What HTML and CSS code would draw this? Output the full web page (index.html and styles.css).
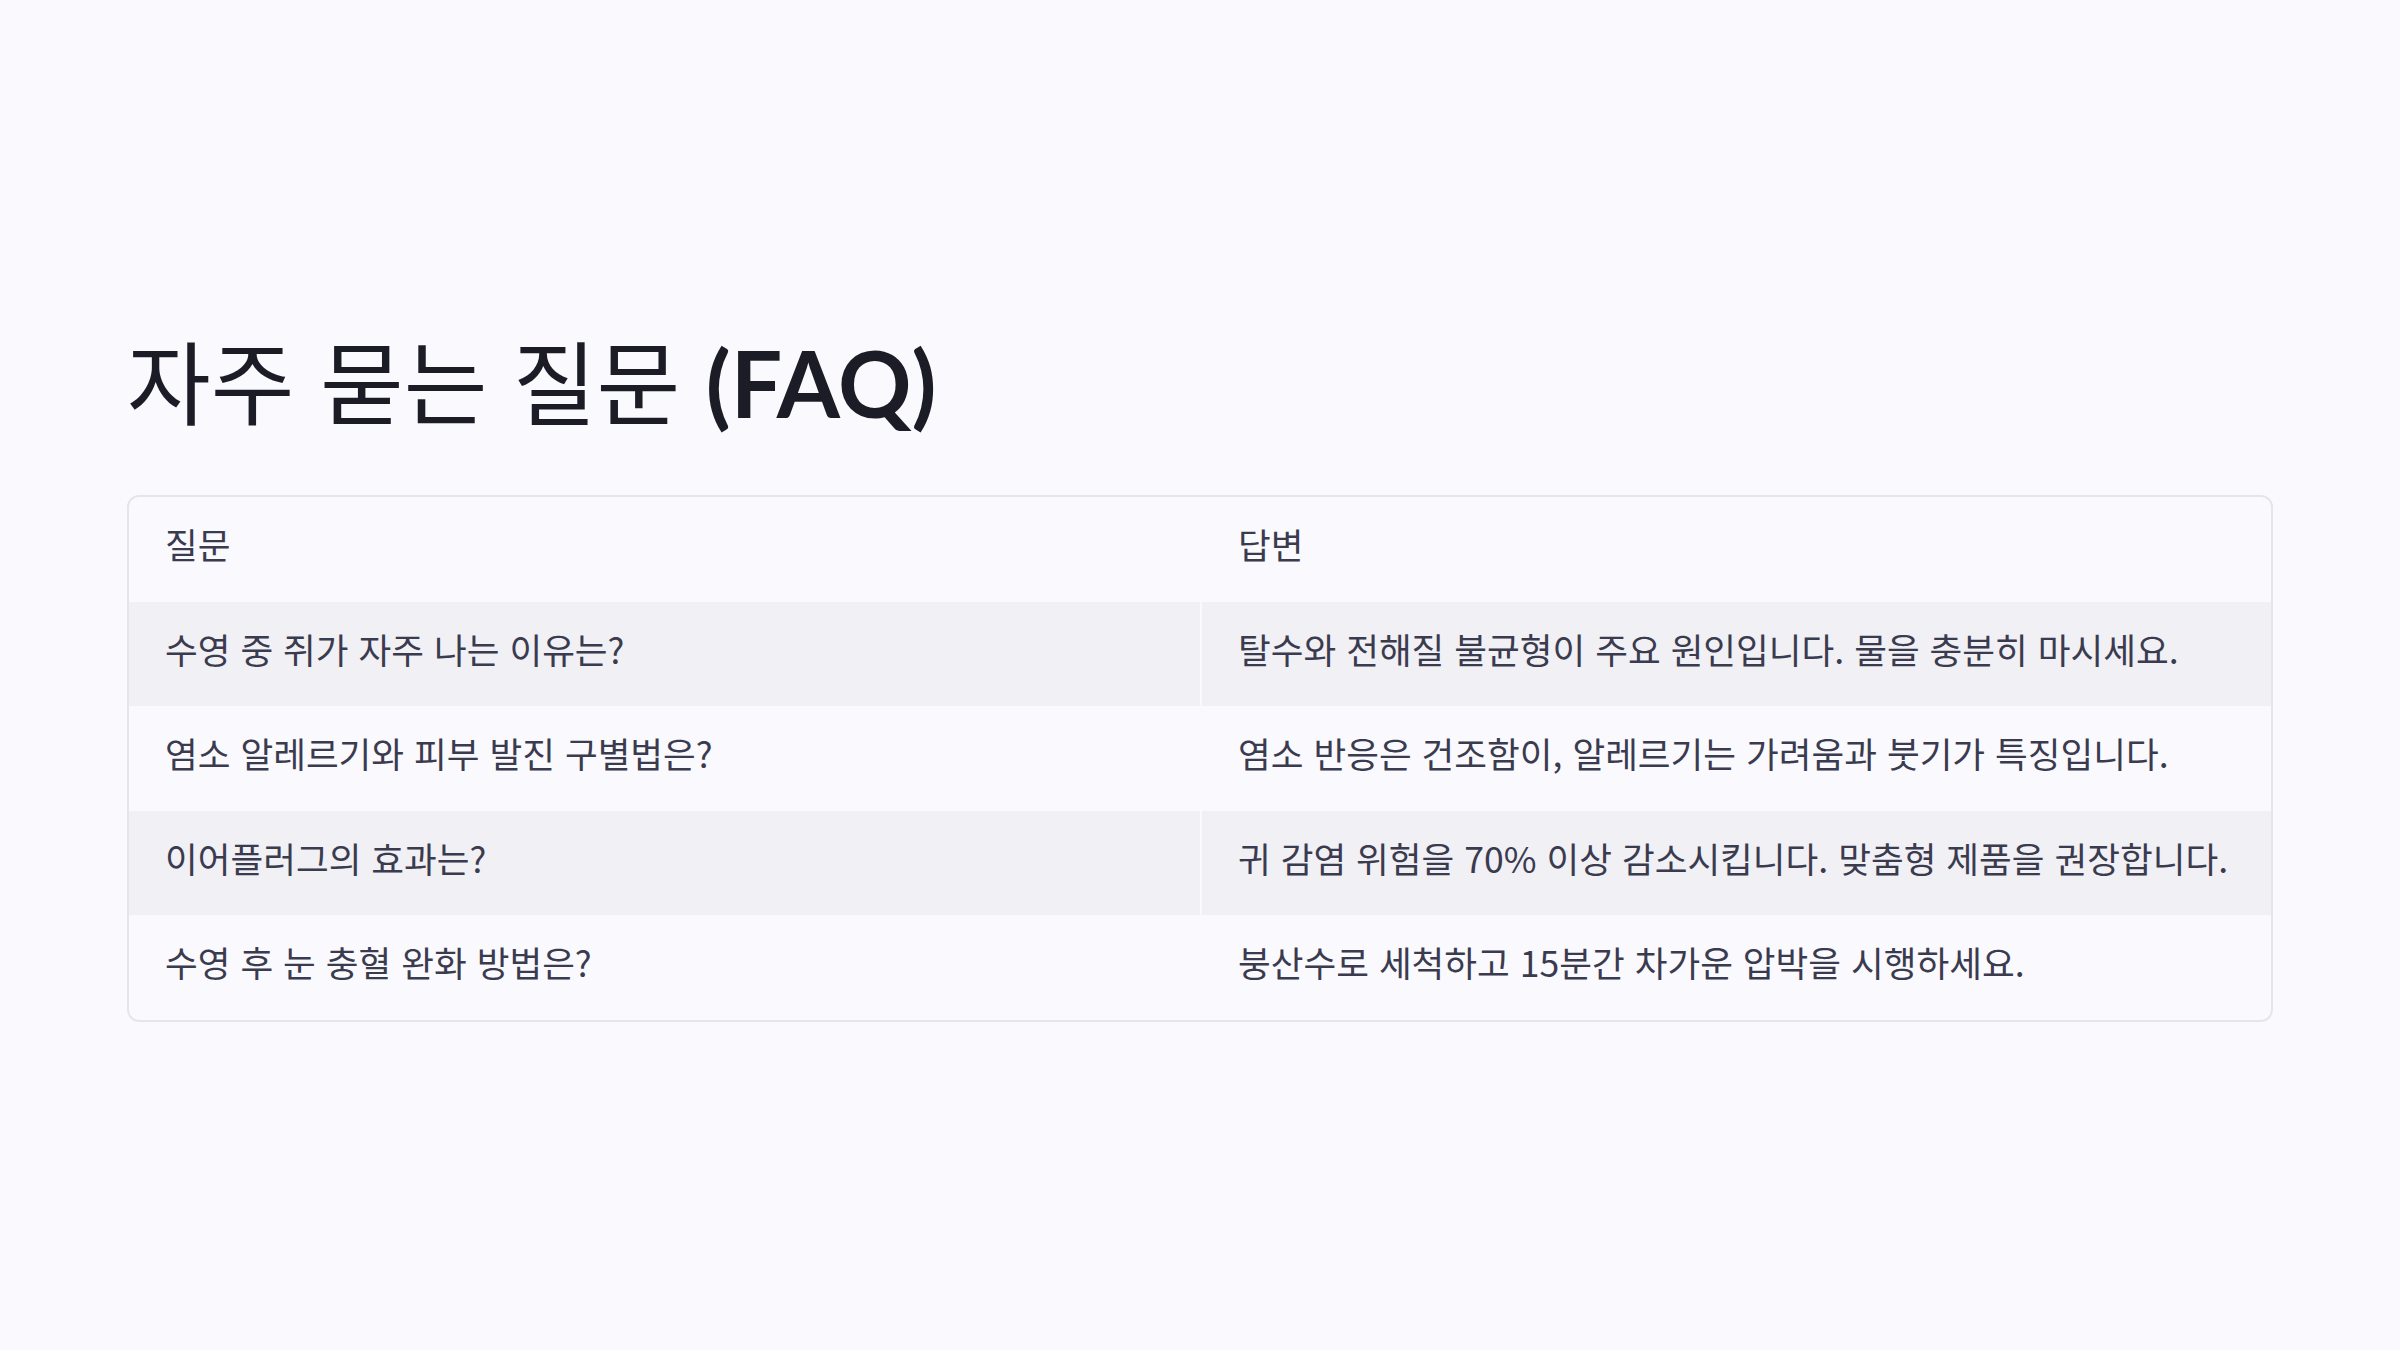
FILE: index.html
```html
<!DOCTYPE html>
<html lang="ko">
<head>
    <meta charset="UTF-8">
    <title>자주 묻는 질문 (FAQ)</title>
    <link rel="stylesheet" href="styles.css">
</head>
<body>
<div class="page">
    <h1 class="title">자주 묻는 질문 <span class="title-en">(FAQ)</span></h1>
    <div class="faq-box">
        <table class="faq">
            <thead>
                <tr>
                    <th>질문</th>
                    <th>답변</th>
                </tr>
            </thead>
            <tbody>
                <tr>
                    <td>수영 중 쥐가 자주 나는 이유는?</td>
                    <td>탈수와 전해질 불균형이 주요 원인입니다. 물을 충분히 마시세요.</td>
                </tr>
                <tr>
                    <td>염소 알레르기와 피부 발진 구별법은?</td>
                    <td>염소 반응은 건조함이, 알레르기는 가려움과 붓기가 특징입니다.</td>
                </tr>
                <tr>
                    <td>이어플러그의 효과는?</td>
                    <td>귀 감염 위험을 70% 이상 감소시킵니다. 맞춤형 제품을 권장합니다.</td>
                </tr>
                <tr>
                    <td>수영 후 눈 충혈 완화 방법은?</td>
                    <td>붕산수로 세척하고 15분간 차가운 압박을 시행하세요.</td>
                </tr>
            </tbody>
        </table>
    </div>
</div>
</body>
</html>
```

FILE: styles.css
```css
* {
    margin: 0;
    padding: 0;
    box-sizing: border-box;
}
body {
    background-color: #f9f9fe;
    font-family: "Noto Sans CJK KR", "Noto Sans", sans-serif;
    color: #3b3b4f;
}
.page {
    padding: 324px 127px 0 127px;
}
.title {
    font-size: 91px;
    font-weight: 400;
    line-height: 1.2;
    color: #1c1c27;
    margin-bottom: 58px;
}
.title-en {
    font-family: "Lato", "Noto Sans", sans-serif;
    font-weight: 700;
}
.faq-box {
    border: 2px solid #e5e5eb;
    border-radius: 12px;
    overflow: hidden;
}
.faq {
    width: 100%;
    border-collapse: separate;
    border-spacing: 0;
    table-layout: fixed;
}
.faq th,
.faq td {
    height: 104.5px;
    padding: 0 36px 11px 36px;
    text-align: left;
    font-size: 35.6px;
    font-weight: 400;
    vertical-align: middle;
}
.faq th + th,
.faq td + td {
    border-left: 2px solid #f9f9fe;
}
.faq tbody tr:nth-child(odd) td {
    background-color: #f0f0f5;
}
```
